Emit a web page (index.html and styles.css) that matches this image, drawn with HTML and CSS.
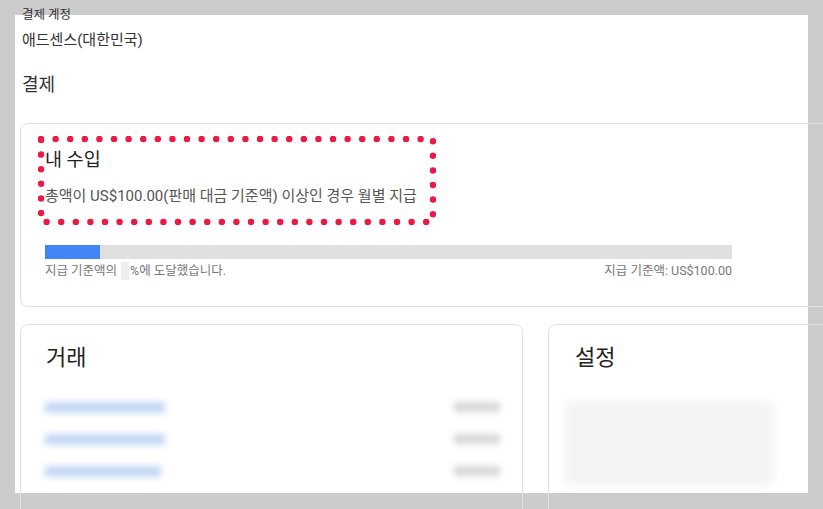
FILE: index.html
```html
<!DOCTYPE html>
<html lang="ko">
<head>
    <meta charset="UTF-8">
    <title>결제</title>
    <link rel="stylesheet" href="styles.css">
</head>
<body>
    <div class="spotlight"></div>
    <div class="page">
        <div class="account-label">결제 계정</div>
        <div class="account-name">애드센스(대한민국)</div>
        <h1 class="page-title">결제</h1>

        <div class="card earnings">
            <svg class="annotation" width="398" height="89" viewBox="0 0 398 89">
                <rect x="3" y="3" width="392" height="83" fill="none" stroke="#ec1846" stroke-width="6.5" stroke-linecap="round" stroke-dasharray="0 14.6"/>
            </svg>
            <h2 class="card-title">내 수입</h2>
            <p class="earnings-desc">총액이 US$100.00(판매 대금 기준액) 이상인 경우 월별 지급</p>
            <div class="progress">
                <div class="progress-fill" style="width: 55px"></div>
            </div>
            <div class="progress-labels">
                <span>지급 기준액의<span class="hidden-num"></span>%에 도달했습니다.</span>
                <span>지급 기준액: US$100.00</span>
            </div>
        </div>

        <div class="cards-row">
            <div class="card transactions">
                <h2 class="card-title big">거래</h2>
                <div class="tx-row"><span class="blur-link"></span><span class="blur-amount"></span></div>
                <div class="tx-row"><span class="blur-link"></span><span class="blur-amount"></span></div>
                <div class="tx-row"><span class="blur-link short"></span><span class="blur-amount"></span></div>
            </div>
            <div class="card settings">
                <h2 class="card-title big">설정</h2>
                <div class="blur-block"></div>
            </div>
        </div>
    </div>
</body>
</html>
```

FILE: styles.css
```css
html, body {
    margin: 0;
    height: 100%;
}

body {
    background-color: #cccccc;
    font-family: Roboto, "Noto Sans CJK KR", sans-serif;
    color: #333;
    overflow: hidden;
}

/* white area behind the visible part of the page */
.spotlight {
    position: absolute;
    left: 15px;
    top: 15px;
    width: 793px;
    height: 478px;
    background-color: #fff;
}

.page {
    position: relative;
    padding: 6px 0 0 20px;
    width: 900px;
}

.account-label {
    padding-left: 2px;
    font-size: 12.5px;
    line-height: 17px;
    color: #333;
}

.account-name {
    padding-left: 2px;
    margin-top: 7px;
    font-size: 15px;
    line-height: 20px;
    color: #333;
}

.page-title {
    padding-left: 2px;
    margin: 23px 0 26px;
    font-size: 18px;
    line-height: 24px;
    font-weight: 400;
    color: #333;
}

.card {
    position: relative;
    border: 1px solid #e2e2e2;
    border-radius: 8px;
    box-sizing: border-box;
}

.earnings {
    width: 860px;
    padding: 24px 24px 26px;
}

.annotation {
    position: absolute;
    left: 17px;
    top: 12px;
}

.card-title {
    margin: 0;
    font-size: 18.5px;
    line-height: 24px;
    font-weight: 400;
    color: #222;
}

.card-title.big {
    font-size: 22px;
    line-height: 30px;
}

.earnings-desc {
    margin: 13px 0 0;
    font-size: 15px;
    line-height: 22px;
    color: #555;
}

.progress {
    margin-top: 38px;
    width: 687px;
    height: 14px;
    background-color: #e0e0e0;
}

.progress-fill {
    height: 100%;
    background-color: #4285f4;
}

.progress-labels {
    width: 687px;
    display: flex;
    justify-content: space-between;
    margin-top: 3px;
    font-size: 12.5px;
    line-height: 18px;
    color: #777;
}

.hidden-num {
    display: inline-block;
    width: 8px;
    height: 18px;
    margin: 0 1px 0 4px;
    vertical-align: top;
    background-color: #eeeeee;
}

.cards-row {
    display: flex;
    gap: 25px;
    margin-top: 17px;
}

.transactions {
    width: 503px;
    height: 220px;
    padding: 18px 22px 0 25px;
}

.settings {
    flex: 1;
    height: 220px;
    padding: 18px 24px 0 26px;
}

.tx-row {
    display: flex;
    justify-content: space-between;
    align-items: center;
    height: 32px;
}

.tx-row:first-of-type {
    margin-top: 18px;
}

.blur-link {
    width: 120px;
    height: 11px;
    margin-left: -1px;
    background-color: #c4d8f4;
    filter: blur(3px);
}

.blur-link.short {
    width: 116px;
}

.blur-amount {
    width: 46px;
    height: 10px;
    background-color: #d8d8d8;
    filter: blur(3px);
}

.blur-block {
    margin-top: 28px;
    margin-left: -10px;
    width: 208px;
    height: 84px;
    background-color: #f4f4f4;
    filter: blur(4px);
}
```
